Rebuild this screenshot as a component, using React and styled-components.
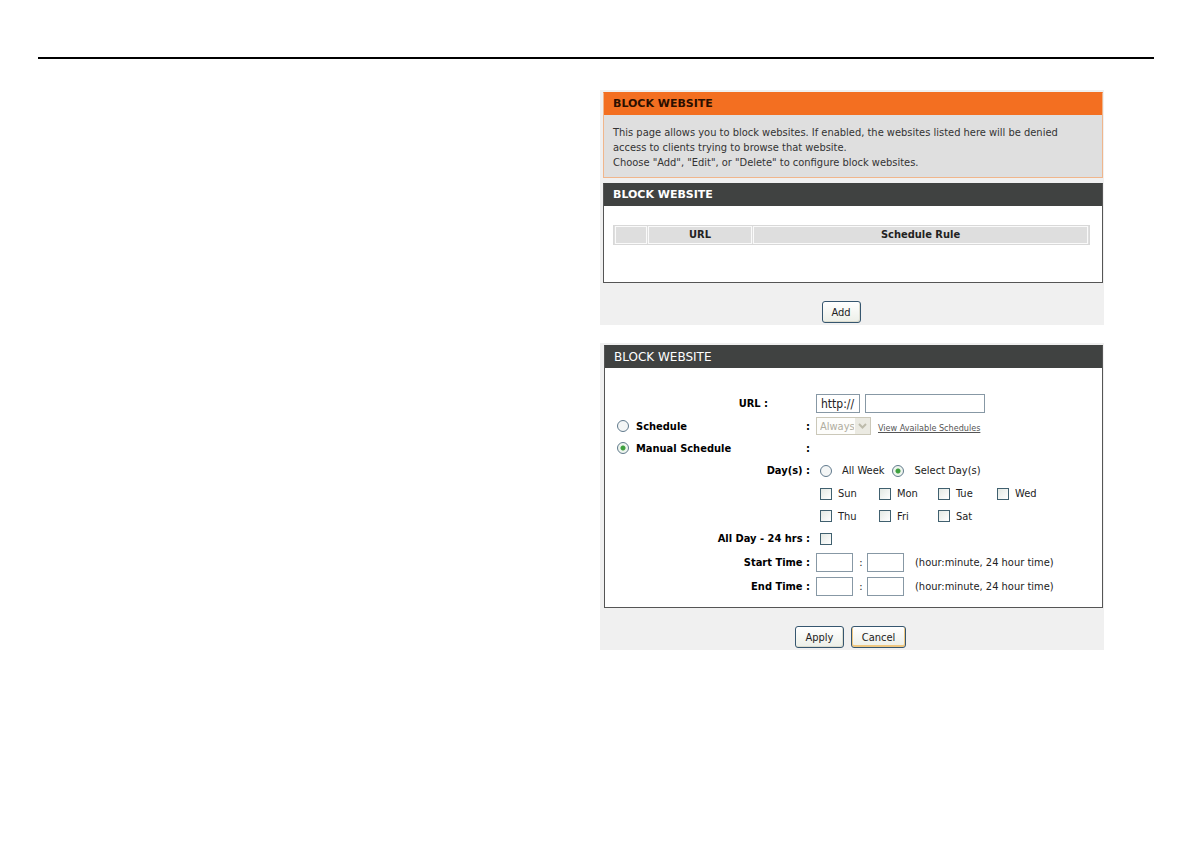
import React from "react";
import styled, { createGlobalStyle } from "styled-components";

const days = [
  ["Sun", "Mon", "Tue", "Wed"],
  ["Thu", "Fri", "Sat"],
];

const TimeRow = ({ label, name }) => (
  <Row $height={24}>
    <Label htmlFor={name + "-hour"}>{label} :</Label>
    <Fields>
      <TextInput id={name + "-hour"} $width={37} />
      <Colon>:</Colon>
      <TextInput aria-label={label + " minute"} $width={37} />
      <Hint>(hour:minute, 24 hour time)</Hint>
    </Fields>
  </Row>
);

const App = () => {
  return (
    <Page>
      <GlobalStyle />
      <Rule />
      <Content>
        <Column>
          <Panel>
            <Notice>
              <Title $orange>BLOCK WEBSITE</Title>
              <p>
                This page allows you to block websites. If enabled, the websites listed here will be denied
                access to clients trying to browse that website.
                <br />
                Choose "Add", "Edit", or "Delete" to configure block websites.
              </p>
            </Notice>
            <Box>
              <Title>BLOCK WEBSITE</Title>
              <TableArea>
                <Table>
                  <thead>
                    <tr>
                      <HeadCell $width={32} />
                      <HeadCell $width={104}>URL</HeadCell>
                      <HeadCell>Schedule Rule</HeadCell>
                    </tr>
                  </thead>
                </Table>
              </TableArea>
            </Box>
            <Actions $inset={24}>
              <Button type="button" $width={39}>Add</Button>
            </Actions>
          </Panel>

          <Panel as="form" $form>
            <Box>
              <Title $light>BLOCK WEBSITE</Title>
              <FormArea>
                <Row $height={23}>
                  <Label htmlFor="url" $inset>URL :</Label>
                  <Fields>
                    <TextInput aria-label="Protocol" defaultValue="http://" readOnly $width={44} />
                    <TextInput id="url" $width={120} $gap />
                  </Fields>
                </Row>
                <Row $height={22}>
                  <Choice>
                    <Radio id="schedule" name="mode" />
                    <label htmlFor="schedule">Schedule</label>
                    <span>:</span>
                  </Choice>
                  <Fields>
                    <SelectWrap>
                      <select aria-label="Schedule" disabled>
                        <option>Always</option>
                      </select>
                      <svg width="15" height="16" viewBox="0 0 15 16">
                        <rect width="15" height="16" fill="#ebeae2" />
                        <path d="M4 6l3.5 3.5L11 6" fill="none" stroke="#bdbbab" strokeWidth="2" />
                      </svg>
                    </SelectWrap>
                    <Link href="#schedules">View Available Schedules</Link>
                  </Fields>
                </Row>
                <Row $height={22}>
                  <Choice>
                    <Radio id="manual" name="mode" defaultChecked />
                    <label htmlFor="manual">Manual Schedule</label>
                    <span>:</span>
                  </Choice>
                </Row>
                <Row $height={23}>
                  <Label as="span">Day(s) :</Label>
                  <Options>
                    <Radio id="all-week" name="days" />
                    <RadioText htmlFor="all-week">All Week</RadioText>
                    <Radio id="select-days" name="days" defaultChecked />
                    <RadioText htmlFor="select-days">Select Day(s)</RadioText>
                  </Options>
                </Row>
                {days.map((line, i) => (
                  <Row key={i} $height={i ? 22 : 23}>
                    <span />
                    <Options>
                      {line.map((day) => (
                        <Day key={day}>
                          <Checkbox />
                          {day}
                        </Day>
                      ))}
                    </Options>
                  </Row>
                ))}
                <Row $height={23}>
                  <Label htmlFor="all-day">All Day - 24 hrs :</Label>
                  <Options>
                    <Checkbox id="all-day" />
                  </Options>
                </Row>
                <TimeRow label="Start Time" name="start" />
                <TimeRow label="End Time" name="end" />
              </FormArea>
            </Box>
            <Actions $inset={6}>
              <Button type="button" $width={49}>Apply</Button>
              <Button type="button" $width={55} $gold>Cancel</Button>
            </Actions>
          </Panel>
        </Column>
      </Content>
    </Page>
  );
};

const GlobalStyle = createGlobalStyle`
  * {
    box-sizing: border-box;
  }
  body {
    margin: 0;
    background: white;
    color: #222;
    font-family: "DejaVu Sans Condensed", "DejaVu Sans", sans-serif;
    font-size: 11px;
    line-height: 15px;
  }
  input, select, button {
    margin: 0;
    font: inherit;
    color: inherit;
  }
`;

const Page = styled.main`
  padding: 57px 36px 40px 38px;
`;

const Rule = styled.hr`
  height: 2px;
  margin: 0;
  border: 0;
  background: #000;
`;

const Content = styled.div`
  display: grid;
  grid-template-columns: 562fr 504fr;
  padding: 31px 50px 0 0;
`;

const Column = styled.div`
  grid-column: 2;
  display: flex;
  flex-direction: column;
  gap: 18px;
`;

const Panel = styled.section`
  padding: 2px 1px 2px ${({ $form }) => ($form ? 4 : 3)}px;
  background: #f0f0f0;
`;

const Title = styled.h2`
  height: 22px;
  margin: 0;
  padding: 0 9px;
  background: ${({ $orange }) => ($orange ? "#f36f21" : "#404241")};
  color: ${({ $orange }) => ($orange ? "#2b0f00" : "#fff")};
  font-family: "DejaVu Sans", sans-serif;
  font-size: ${({ $light }) => ($light ? 12 : 11)}px;
  font-weight: ${({ $light }) => ($light ? 400 : 700)};
  line-height: 22px;
`;

const Notice = styled.div`
  margin-bottom: 5px;
  border: 1px solid #f0b68c;
  border-top-color: #f36f21;
  background: #dfdfdf;
  p {
    margin: 0;
    padding: 10px 30px 7px 9px;
    color: #333;
  }
`;

const Box = styled.div`
  border: 1px solid #555;
  border-top-color: #404241;
  background: white;
`;

const TableArea = styled.div`
  padding: 19px 12px 37px 9px;
`;

const Table = styled.table`
  width: 100%;
  table-layout: fixed;
  border: 1px solid #d8d8d8;
  border-spacing: 1px 0;
  background: #dedede;
`;

const HeadCell = styled.th`
  width: ${({ $width }) => ($width ? $width + "px" : "auto")};
  height: 18px;
  padding: 0;
  border: 1px solid #fafafa;
  line-height: 16px;
`;

const Actions = styled.div`
  display: flex;
  justify-content: center;
  gap: 7px;
  padding: 18px ${({ $inset }) => $inset}px 0 0;
`;

const Button = styled.button`
  width: ${({ $width }) => $width}px;
  height: 22px;
  padding: 0;
  border: 1px solid #36566f;
  border-radius: 3px;
  background: linear-gradient(#fff, #ecefe8);
  box-shadow: ${({ $gold }) => ($gold ? "inset 0 -1px 0 1px #efc780" : "inset -1px -1px 0 #dcdccf")};
`;

const FormArea = styled.div`
  padding: 24px 10px 9px 12px;
`;

const Row = styled.div`
  display: grid;
  grid-template-columns: 193px 1fr;
  gap: 6px;
  align-items: center;
  height: ${({ $height }) => $height}px;
`;

const Label = styled.label`
  padding-right: ${({ $inset }) => ($inset ? 42 : 0)}px;
  color: #000;
  font-weight: 700;
  text-align: right;
`;

const Fields = styled.div`
  display: flex;
  align-items: center;
`;

const Options = styled(Fields)`
  padding-left: 4px;
`;

const Choice = styled.div`
  display: flex;
  align-items: center;
  gap: 7px;
  color: #000;
  font-weight: 700;
  span {
    margin-left: auto;
  }
`;

const TextInput = styled.input.attrs({ type: "text" })`
  width: ${({ $width }) => $width}px;
  height: 19px;
  margin-left: ${({ $gap }) => ($gap ? 5 : 0)}px;
  padding: 0 4px;
  border: 1px solid #8798a5;
  background: white;
  font-size: 12px;
`;

const Radio = styled.input.attrs({ type: "radio" })`
  appearance: none;
  flex: none;
  width: 12px;
  height: 12px;
  border: 1px solid #60798c;
  border-radius: 50%;
  background: #f4f6f6;
  &:checked {
    background: radial-gradient(circle, #3fa03f 2px, #eef5ee 3px);
  }
`;

const Checkbox = styled.input.attrs({ type: "checkbox" })`
  appearance: none;
  flex: none;
  width: 12px;
  height: 12px;
  border: 1px solid #40606f;
  background: linear-gradient(135deg, #e3e8e3, #fff);
`;

const RadioText = styled.label`
  margin: 0 8px 0 10px;
`;

const Day = styled.label`
  display: flex;
  align-items: center;
  gap: 6px;
  width: 59px;
`;

const Colon = styled.span`
  width: 14px;
  padding-left: 2px;
  text-align: center;
`;

const Hint = styled.span`
  margin-left: 11px;
`;

const SelectWrap = styled.span`
  position: relative;
  width: 55px;
  height: 18px;
  select {
    appearance: none;
    display: block;
    width: 100%;
    height: 100%;
    padding: 0 16px 0 3px;
    border: 1px solid #cbc8b9;
    border-radius: 0;
    background: #fdfdfb;
    color: #b0ada0;
    opacity: 1;
  }
  svg {
    position: absolute;
    top: 1px;
    right: 1px;
    pointer-events: none;
  }
`;

const Link = styled.a`
  margin: 4px 0 0 7px;
  color: #555;
  font-size: 9px;
  line-height: 14px;
`;

export default App;
